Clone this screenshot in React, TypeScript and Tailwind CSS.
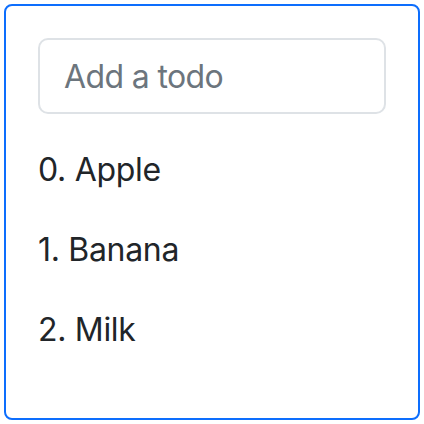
import React, { useState } from 'react';

const App: React.FC = () => {
  const [todos] = useState<string[]>(['Apple', 'Banana', 'Milk']);
  const [text, setText] = useState('');

  return (
    <div className="p-1 bg-white" style={{ fontFamily: 'Inter, "Liberation Sans", sans-serif' }}>
      <div className="w-[416px] border-2 border-[#0d6efd] rounded-[8px] p-8 text-[#212529] tracking-[-0.02em]">
        <input
          value={text}
          onChange={(e) => setText(e.target.value)}
          placeholder="Add a todo"
          className="block w-full h-[76px] mb-8 px-6 border-2 border-[#dee2e6] rounded-[10px] text-[32px] leading-[48px] tracking-[-0.02em] placeholder:text-[#6c757d] outline-none"
        />
        {todos.map((todo, i) => (
          <p key={todo} className="mb-8 text-[32px] leading-[48px]">
            {i}. {todo}
          </p>
        ))}
      </div>
    </div>
  );
};

export default App;
